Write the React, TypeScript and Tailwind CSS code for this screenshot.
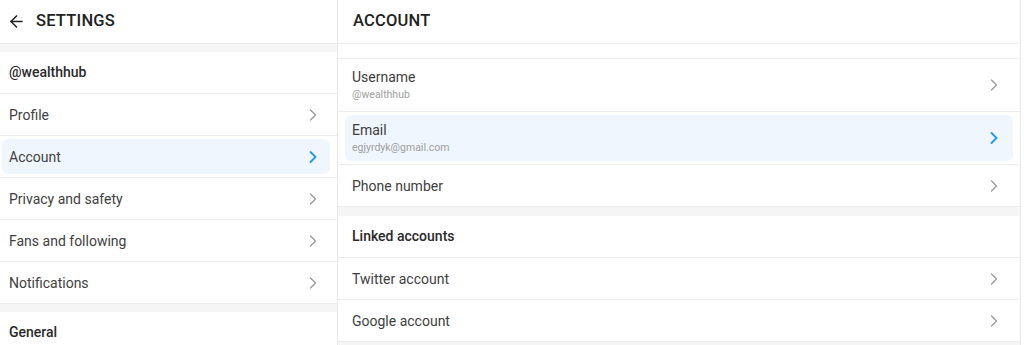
import { ArrowLeft, ChevronRight } from 'lucide-react';

const MENU = ['Profile', 'Account', 'Privacy and safety', 'Fans and following', 'Notifications'];

function Chevron({ active }: { active?: boolean }) {
  return (
    <ChevronRight
      size={20}
      strokeWidth={active ? 2.2 : 1.5}
      className={active ? 'text-[#1e9bf0]' : 'text-[#999]'}
    />
  );
}

function MenuRow({ label, active }: { label: string; active?: boolean }) {
  return (
    <div className="h-[42px] shrink-0 border-b border-[#ececec] flex">
      <div
        className={`flex-1 flex items-center justify-between pl-[7px] pr-[7px] ${
          active ? 'my-[3px] ml-[2px] mr-[7px] rounded-md bg-[#eff6fd]' : 'ml-[2px] mr-[7px]'
        }`}
      >
        <span className="text-[14px] leading-[20px] text-[#404040]">{label}</span>
        <Chevron active={active} />
      </div>
    </div>
  );
}

function AccountRow({ title, sub, active }: { title: string; sub?: string; active?: boolean }) {
  return (
    <div className={`${sub ? 'h-[53px]' : 'h-[42px]'} shrink-0 border-b border-[#ececec] flex`}>
      <div
        className={`flex-1 flex items-center justify-between mx-[7px] pl-[7px] pr-[9px] ${
          active ? 'my-[3px] rounded-md bg-[#eff6fd]' : ''
        }`}
      >
        <div className="flex flex-col">
          <span className="text-[14px] text-[#404040] leading-[20px]">{title}</span>
          {sub && <span className="text-[10.5px] text-[#9e9e9e] leading-[16px]">{sub}</span>}
        </div>
        <Chevron active={active} />
      </div>
    </div>
  );
}

export default function App() {
  return (
    <div className="w-[1024px] h-[345px] overflow-hidden bg-white flex font-['Roboto',sans-serif]">
      <div className="w-[338px] shrink-0 border-r border-[#e8e8e8] flex flex-col">
        <div className="h-[44px] shrink-0 border-b border-[#ececec] flex items-center pl-[7px] gap-[10px]">
          <ArrowLeft size={19} strokeWidth={2} className="text-[#222]" />
          <span className="text-[16.5px] font-medium text-[#222] tracking-[0.2px]">SETTINGS</span>
        </div>
        <div className="h-[8px] shrink-0 bg-[#f5f5f5]" />
        <div className="h-[42px] shrink-0 border-b border-[#ececec] flex items-center px-[9px]">
          <span className="text-[14px] font-medium text-[#2a2a2a]">@wealthhub</span>
        </div>
        {MENU.map(m => (
          <MenuRow key={m} label={m} active={m === 'Account'} />
        ))}
        <div className="h-[8px] shrink-0 bg-[#f5f5f5]" />
        <div className="h-[40px] shrink-0 flex items-center px-[9px]">
          <span className="text-[14px] font-medium text-[#2a2a2a]">General</span>
        </div>
      </div>

      <div className="w-[683px] shrink-0 border-r border-[#e8e8e8] flex flex-col">
        <div className="h-[44px] shrink-0 border-b border-[#ececec] flex items-center pl-[15px]">
          <span className="text-[16.5px] font-medium text-[#222] tracking-[0.2px]">ACCOUNT</span>
        </div>
        <div className="h-[15px] shrink-0 border-b border-[#ececec]" />
        <AccountRow title="Username" sub="@wealthhub" />
        <AccountRow title="Email" sub="egjyrdyk@gmail.com" active />
        <AccountRow title="Phone number" />
        <div className="h-[9px] shrink-0 bg-[#f5f5f5]" />
        <div className="h-[42px] shrink-0 border-b border-[#ececec] flex items-center px-[14px]">
          <span className="text-[14px] font-medium text-[#2a2a2a]">Linked accounts</span>
        </div>
        <AccountRow title="Twitter account" />
        <AccountRow title="Google account" />
        <div className="h-[8px] shrink-0 bg-[#f5f5f5]" />
      </div>
      <div className="flex-1" />
    </div>
  );
}
